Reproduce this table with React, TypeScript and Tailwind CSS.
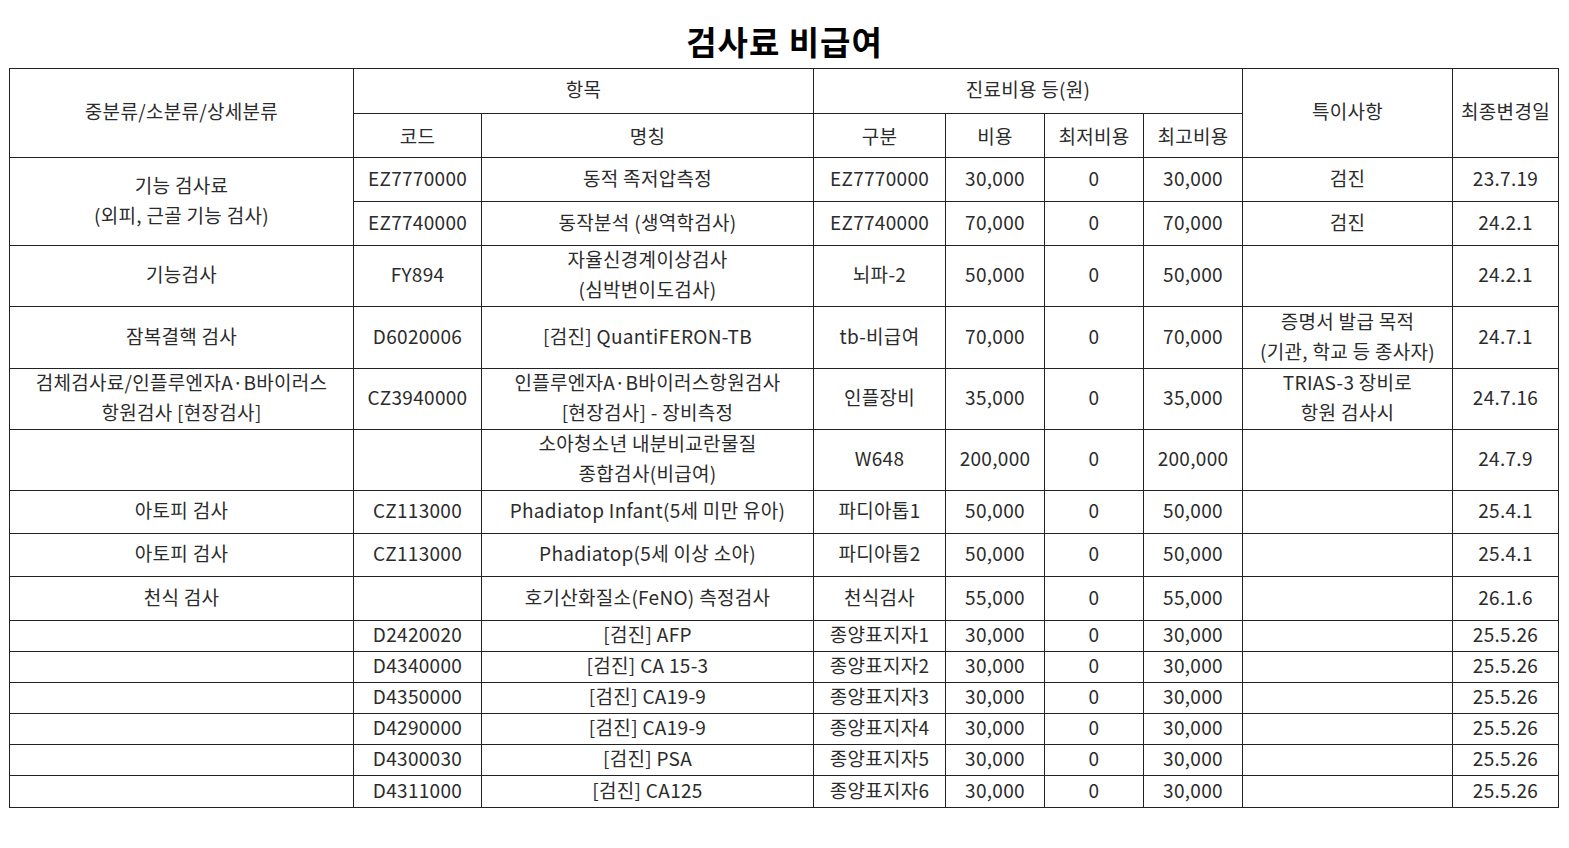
type Row = {
  h: number;
  cat?: string[] | null;
  catSpan?: number;
  code: string;
  name: string[];
  kind: string;
  cost: string;
  min: string;
  max: string;
  note: string[];
  date: string;
};

const rows: Row[] = [
  { h: 44, cat: ["기능 검사료", "(외피, 근골 기능 검사)"], catSpan: 2, code: "EZ7770000", name: ["동적 족저압측정"], kind: "EZ7770000", cost: "30,000", min: "0", max: "30,000", note: ["검진"], date: "23.7.19" },
  { h: 44, cat: null, code: "EZ7740000", name: ["동작분석 (생역학검사)"], kind: "EZ7740000", cost: "70,000", min: "0", max: "70,000", note: ["검진"], date: "24.2.1" },
  { h: 60, cat: ["기능검사"], code: "FY894", name: ["자율신경계이상검사", "(심박변이도검사)"], kind: "뇌파-2", cost: "50,000", min: "0", max: "50,000", note: [], date: "24.2.1" },
  { h: 62, cat: ["잠복결핵 검사"], code: "D6020006", name: ["[검진] QuantiFERON-TB"], kind: "tb-비급여", cost: "70,000", min: "0", max: "70,000", note: ["증명서 발급 목적", "(기관, 학교 등 종사자)"], date: "24.7.1" },
  { h: 60, cat: ["검체검사료/인플루엔자A·B바이러스", "항원검사 [현장검사]"], code: "CZ3940000", name: ["인플루엔자A·B바이러스항원검사", "[현장검사] - 장비측정"], kind: "인플장비", cost: "35,000", min: "0", max: "35,000", note: ["TRIAS-3 장비로", "항원 검사시"], date: "24.7.16" },
  { h: 61, cat: [], code: "", name: ["소아청소년 내분비교란물질", "종합검사(비급여)"], kind: "W648", cost: "200,000", min: "0", max: "200,000", note: [], date: "24.7.9" },
  { h: 43, cat: ["아토피 검사"], code: "CZ113000", name: ["Phadiatop Infant(5세 미만 유아)"], kind: "파디아톱1", cost: "50,000", min: "0", max: "50,000", note: [], date: "25.4.1" },
  { h: 43, cat: ["아토피 검사"], code: "CZ113000", name: ["Phadiatop(5세 이상 소아)"], kind: "파디아톱2", cost: "50,000", min: "0", max: "50,000", note: [], date: "25.4.1" },
  { h: 44, cat: ["천식 검사"], code: "", name: ["호기산화질소(FeNO) 측정검사"], kind: "천식검사", cost: "55,000", min: "0", max: "55,000", note: [], date: "26.1.6" },
  { h: 31, cat: [], code: "D2420020", name: ["[검진] AFP"], kind: "종양표지자1", cost: "30,000", min: "0", max: "30,000", note: [], date: "25.5.26" },
  { h: 31, cat: [], code: "D4340000", name: ["[검진] CA 15-3"], kind: "종양표지자2", cost: "30,000", min: "0", max: "30,000", note: [], date: "25.5.26" },
  { h: 31, cat: [], code: "D4350000", name: ["[검진] CA19-9"], kind: "종양표지자3", cost: "30,000", min: "0", max: "30,000", note: [], date: "25.5.26" },
  { h: 31, cat: [], code: "D4290000", name: ["[검진] CA19-9"], kind: "종양표지자4", cost: "30,000", min: "0", max: "30,000", note: [], date: "25.5.26" },
  { h: 31, cat: [], code: "D4300030", name: ["[검진] PSA"], kind: "종양표지자5", cost: "30,000", min: "0", max: "30,000", note: [], date: "25.5.26" },
  { h: 32, cat: [], code: "D4311000", name: ["[검진] CA125"], kind: "종양표지자6", cost: "30,000", min: "0", max: "30,000", note: [], date: "25.5.26" },
];

const cell = "border border-[#222] text-center align-middle p-0 leading-[30px]";

function Lines({ lines }: { lines: string[] }) {
  return (
    <>
      {lines.map((l, i) => (
        <div key={i} className="-translate-y-[2px] whitespace-nowrap">
          {l}
        </div>
      ))}
    </>
  );
}

export default function App() {
  return (
    <div
      className="min-h-[848px] bg-white text-[#2b2b2b]"
      style={{ fontFamily: '"Noto Sans CJK KR", "Noto Sans", sans-serif' }}
    >
      <div className="flex h-[68px] items-center justify-center pt-[16px]">
        <h1 className="text-[33px] font-bold tracking-[1px] text-black">검사료 비급여</h1>
      </div>

      <table className="ml-[9px] w-[1550px] table-fixed border-collapse text-[19px] tracking-[0.3px]">
        <colgroup>
          <col className="w-[344px]" />
          <col className="w-[128px]" />
          <col className="w-[332px]" />
          <col className="w-[132px]" />
          <col className="w-[99px]" />
          <col className="w-[99px]" />
          <col className="w-[99px]" />
          <col className="w-[210px]" />
          <col className="w-[106px]" />
        </colgroup>
        <thead>
          <tr className="h-[45px]">
            <th rowSpan={2} className={`${cell} font-normal`}><Lines lines={["중분류/소분류/상세분류"]} /></th>
            <th colSpan={2} className={`${cell} font-normal`}><Lines lines={["항목"]} /></th>
            <th colSpan={4} className={`${cell} font-normal`}><Lines lines={["진료비용 등(원)"]} /></th>
            <th rowSpan={2} className={`${cell} font-normal`}><Lines lines={["특이사항"]} /></th>
            <th rowSpan={2} className={`${cell} font-normal`}><Lines lines={["최종변경일"]} /></th>
          </tr>
          <tr className="h-[44px]">
            <th className={`${cell} font-normal`}>코드</th>
            <th className={`${cell} font-normal`}>명칭</th>
            <th className={`${cell} font-normal`}>구분</th>
            <th className={`${cell} font-normal`}>비용</th>
            <th className={`${cell} font-normal`}>최저비용</th>
            <th className={`${cell} font-normal`}>최고비용</th>
          </tr>
        </thead>
        <tbody>
          {rows.map((r, i) => (
            <tr key={i} style={{ height: r.h }}>
              {r.cat !== null && (
                <td rowSpan={r.catSpan ?? 1} className={cell}>
                  <Lines lines={r.cat ?? []} />
                </td>
              )}
              <td className={cell}><Lines lines={[r.code]} /></td>
              <td className={cell}>
                <Lines lines={r.name} />
              </td>
              <td className={cell}><Lines lines={[r.kind]} /></td>
              <td className={cell}><Lines lines={[r.cost]} /></td>
              <td className={cell}><Lines lines={[r.min]} /></td>
              <td className={cell}><Lines lines={[r.max]} /></td>
              <td className={cell}>
                <Lines lines={r.note} />
              </td>
              <td className={cell}><Lines lines={[r.date]} /></td>
            </tr>
          ))}
        </tbody>
      </table>
    </div>
  );
}
